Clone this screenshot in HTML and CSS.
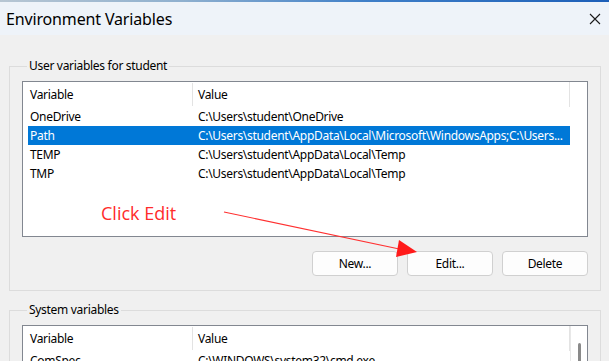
FILE: index.html
```html
<!DOCTYPE html>
<html lang="en">
<head>
    <meta charset="UTF-8">
    <meta name="viewport" content="width=device-width,initial-scale=1.0">
    <title>Environment Variables</title>
    <link rel="stylesheet" href="styles.css">
</head>
<body>
    <div class="wallpaper"></div>
    <div class="window">
        <header class="titlebar">
            <span class="title">Environment Variables</span>
            <svg class="close-icon" width="12" height="12" viewBox="0 0 12 12">
                <path d="M1 1 L11 11 M11 1 L1 11" stroke="#1a1a1a" stroke-width="1.1" fill="none"/>
            </svg>
        </header>
        <main class="dialog">
            <fieldset class="group">
                <legend>User variables for student</legend>
                <div class="listview user-list">
                    <div class="lv-head">
                        <span class="col-name">Variable</span>
                        <span class="col-value">Value</span>
                    </div>
                    <div class="lv-row">
                        <span class="col-name">OneDrive</span>
                        <span class="col-value">C:\Users\student\OneDrive</span>
                    </div>
                    <div class="lv-row selected">
                        <span class="col-name">Path</span>
                        <span class="col-value">C:\Users\student\AppData\Local\Microsoft\WindowsApps;C:\Users...</span>
                    </div>
                    <div class="lv-row">
                        <span class="col-name">TEMP</span>
                        <span class="col-value">C:\Users\student\AppData\Local\Temp</span>
                    </div>
                    <div class="lv-row">
                        <span class="col-name">TMP</span>
                        <span class="col-value">C:\Users\student\AppData\Local\Temp</span>
                    </div>
                </div>
                <div class="actions">
                    <button class="btn">New...</button>
                    <button class="btn">Edit...</button>
                    <button class="btn">Delete</button>
                </div>
            </fieldset>
            <fieldset class="group">
                <legend>System variables</legend>
                <div class="listview system-list">
                    <div class="lv-body">
                        <div class="lv-head">
                            <span class="col-name">Variable</span>
                            <span class="col-value">Value</span>
                        </div>
                        <div class="lv-row">
                            <span class="col-name">ComSpec</span>
                            <span class="col-value">C:\WINDOWS\system32\cmd.exe</span>
                        </div>
                    </div>
                    <div class="scrollbar"><span class="thumb"></span></div>
                </div>
            </fieldset>
        </main>
        <!-- annotation drawn over the screenshot -->
        <svg class="annotation" width="609" height="361" viewBox="0 0 609 361">
            <text x="101" y="220" class="note">Click Edit</text>
            <line x1="224" y1="212" x2="404" y2="250" stroke="#ff3030" stroke-width="1.2"/>
            <polygon points="399,240 417,252 396,257" fill="#ff1a1a"/>
        </svg>
    </div>
</body>
</html>
```

FILE: styles.css
```css
:root {
    --dialog-bg: #f0f0f0;
    --title-bg: #eef3f9;
    --group-line: #dcdcdc;
    --list-border: #828790;
    --select-bg: #0078d7;
    --text: #000;
    --red: #ff2b2b;
}
html, body {
    margin: 0;
    padding: 0;
    width: 609px;
    height: 361px;
    overflow: hidden;
    background: var(--dialog-bg);
    font-family: 'Noto Sans', 'Open Sans', sans-serif;
    color: var(--text);
}
.wallpaper {
    height: 2px;
    background: linear-gradient(90deg, #b7c6d3 0%, #8fb0cf 30%, #3f7fc8 60%, #1d5fb8 100%);
}
.window {
    position: relative;
}
.titlebar {
    height: 33px;
    background: var(--title-bg);
    display: flex;
    align-items: center;
    justify-content: space-between;
    padding: 0 8px 0 6px;
}
.title {
    font-size: 16px;
    letter-spacing: -0.15px;
}
.dialog {
    padding: 23px 8px 0 9px;
    display: flex;
    flex-direction: column;
    gap: 11px;
    letter-spacing: -0.3px;
}
/* Group boxes */
.group {
    margin: 0;
    border: 1px solid var(--group-line);
    padding: 7px 12px 14px 12px;
    min-width: 0;
}
.group legend {
    font-size: 12px;
    line-height: 16px;
    padding: 0 2px;
    margin-left: 5px;
}
/* List views */
.listview {
    background: #fff;
    border: 1px solid var(--list-border);
    font-size: 12px;
}
.user-list {
    height: 154px;
}
.system-list {
    height: 60px;
    display: flex;
}
.lv-body {
    flex: 1;
}
.lv-head, .lv-row {
    display: grid;
    grid-template-columns: 164px 1fr;
    margin-left: 5px;
    white-space: nowrap;
}
.lv-head {
    height: 25px;
    align-items: center;
    margin-right: 17px;
    border-right: 1px solid #e3e3e3;
    box-sizing: border-box;
}
.system-list .lv-head {
    margin-right: 0;
}
.lv-head .col-value {
    border-left: 1px solid #e3e3e3;
    height: 23px;
    line-height: 23px;
}
.lv-row {
    height: 19px;
    line-height: 19px;
    margin-right: 17px;
}
.system-list .lv-row {
    margin-right: 0;
}
.col-name {
    padding-left: 2px;
}
.col-value {
    padding-left: 5px;
    overflow: hidden;
}
.lv-row .col-value {
    padding-left: 6px;
}
.lv-row.selected {
    background: var(--select-bg);
    color: #fff;
}
.scrollbar {
    width: 17px;
    border-left: 1px solid #e8e8e8;
    box-sizing: border-box;
    display: flex;
    justify-content: center;
    padding-top: 17px;
}
.thumb {
    width: 3px;
    height: 60px;
    background: #8a8a8a;
    border-radius: 2px;
}
/* Buttons */
.actions {
    display: flex;
    justify-content: flex-end;
    gap: 9px;
    margin-top: 14px;
}
.btn {
    width: 86px;
    height: 25px;
    background: #fdfdfd;
    border: 1px solid #d0d0d0;
    border-radius: 4px;
    font-family: inherit;
    font-size: 12px;
    letter-spacing: -0.3px;
    color: var(--text);
    padding: 0;
}
/* Annotation overlay */
.annotation {
    position: absolute;
    top: -2px;
    left: 0;
    pointer-events: none;
}
.note {
    fill: var(--red);
    font-family: 'Open Sans', 'Noto Sans', sans-serif;
    font-size: 18px;
}
```
